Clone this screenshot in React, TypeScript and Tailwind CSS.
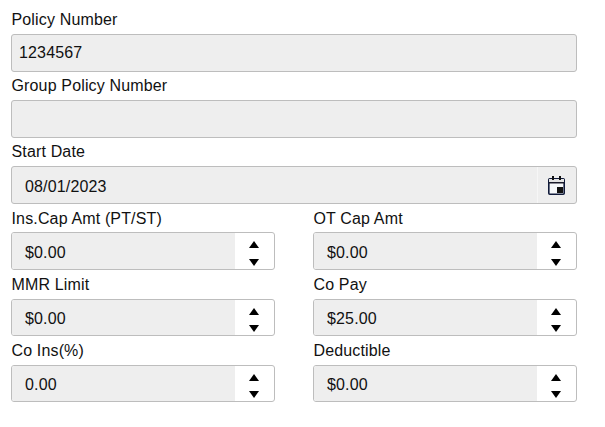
function TextField({ label, value }: { label: string; value?: string }) {
  return (
    <div>
      <label className="block h-7 pt-[3px] pl-[0.5px] leading-[22px]">{label}</label>
      <div className="h-[38px] rounded-[3px] border border-[#bdbdbd] bg-[#eeeeee] px-[7px] leading-[36px]">{value}</div>
    </div>
  )
}

function DateField({ label, value }: { label: string; value: string }) {
  return (
    <div>
      <label className="block h-7 pt-[3px] pl-[0.5px] leading-[22px]">{label}</label>
      <div className="flex h-[38px] rounded-[3px] border border-[#bdbdbd] bg-[#eeeeee]">
        <div className="flex-1 pl-[13px] leading-[39px]">{value}</div>
        <div className="flex w-[39px] items-center justify-center border-l border-[#f6f6f6] pr-[2px]">
          <svg width="17" height="19" viewBox="0 0 17 19" fill="none">
            <rect x="0.8" y="2.8" width="15.4" height="15.4" rx="1" fill="#f6f8fa" stroke="#101a3a" strokeWidth="1.6" />
            <rect x="1" y="3" width="15" height="3" fill="#e4e4e4" />
            <rect x="1" y="6" width="15" height="1.5" fill="#1a1a2a" />
            <rect x="4" y="0" width="2" height="4" fill="#111" />
            <rect x="11" y="0" width="2" height="4" fill="#111" />
            <rect x="9" y="11" width="6" height="6" fill="#111" />
          </svg>
        </div>
      </div>
    </div>
  )
}

function NumberField({ label, value }: { label: string; value: string }) {
  return (
    <div>
      <label className="block h-7 pt-[3.6px] pl-[0.5px] leading-[22px]">{label}</label>
      <div className="flex h-[37.2px] overflow-hidden rounded-[3px] border border-[#bdbdbd] bg-white">
        <div className="flex-1 bg-[#eeeeee] pt-[0.6px] pl-[13px] leading-[38px]">{value}</div>
        <div className="flex w-[39px] flex-col items-center justify-between pt-2 pr-px pb-[3px]">
          <svg width="10" height="7" viewBox="0 0 10 7"><path d="M5 0L10 7H0Z" fill="#000" /></svg>
          <svg width="10" height="7" viewBox="0 0 10 7"><path d="M0 0H10L5 7Z" fill="#000" /></svg>
        </div>
      </div>
    </div>
  )
}

export default function App() {
  return (
    <div className="min-h-screen bg-white pt-[6px] pr-[28px] pl-[11px] text-[16px] tracking-[0.15px] text-[#111] [font-family:'Liberation_Sans',Arial,sans-serif]">
      <TextField label="Policy Number" value="1234567" />
      <TextField label="Group Policy Number" />
      <DateField label="Start Date" value="08/01/2023" />
      <div className="mt-[0.4px] grid grid-cols-[264px_264px] gap-x-[38px] gap-y-px">
        <NumberField label="Ins.Cap Amt (PT/ST)" value="$0.00" />
        <NumberField label="OT Cap Amt" value="$0.00" />
        <NumberField label="MMR Limit" value="$0.00" />
        <NumberField label="Co Pay" value="$25.00" />
        <NumberField label="Co Ins(%)" value="0.00" />
        <NumberField label="Deductible" value="$0.00" />
      </div>
    </div>
  )
}
